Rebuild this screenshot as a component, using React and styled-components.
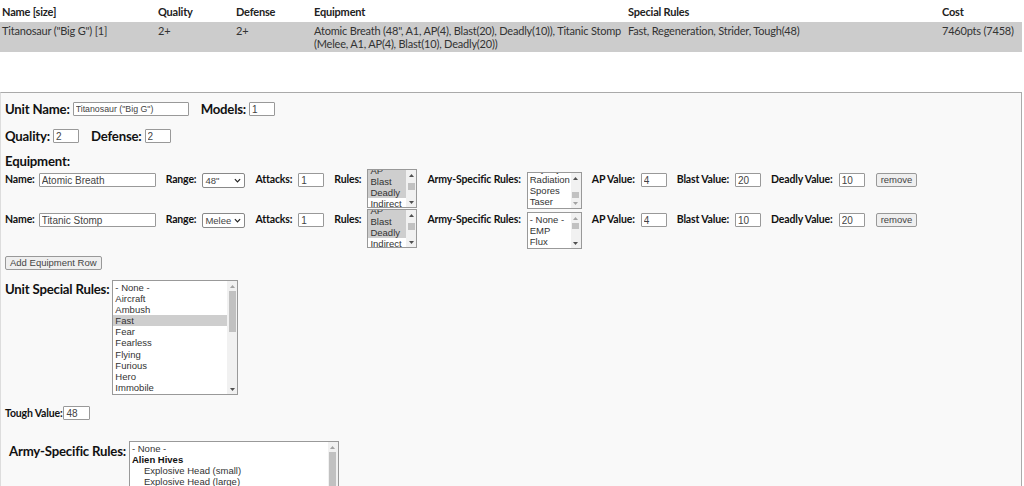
import React from 'react'
import styled, { createGlobalStyle } from 'styled-components'

const GlobalStyle = createGlobalStyle`
  body {
    margin: 0;
    background: #fff;
    font-family: Lato, "Noto Sans", sans-serif;
    color: #222;
  }
`

const ROW = 11.1
const ARROW = 10

const opts = list => list.map(label => ({ label }))

const ruleOptions = opts(['- None -', 'AP', 'Blast', 'Deadly', 'Indirect', 'Poison', 'Rending', 'Sniper'])
const armyOptions = opts(['- None -', 'EMP', 'Flux', 'Lacerate', 'Psy-Injected', 'Radiation', 'Spores', 'Taser'])
const specialRules = opts([
  '- None -', 'Aircraft', 'Ambush', 'Fast', 'Fear', 'Fearless', 'Flying', 'Furious', 'Hero',
  'Immobile', 'Impact', 'Indirect', 'Poison', 'Psychic', 'Regeneration', 'Relentless',
  'Scout', 'Slow', 'Sniper', 'Stealth', 'Strider', 'Tough', 'Transport',
])
const hiveRules = [
  { label: '- None -' },
  { label: 'Alien Hives', group: true },
  ...['Explosive Head (small)', 'Explosive Head (large)', 'Hive Bond', 'Infiltrate',
    'Regrowth', 'Spawn', 'Swarm', 'Synapse'].map(label => ({ label, child: true })),
  { label: 'Battle Brothers', group: true },
  ...['Bolter Drill', 'Combat Shield', 'Psy-Shield'].map(label => ({ label, child: true })),
]

const equipment = [
  { name: 'Atomic Breath', range: '48"', attacks: 1, rules: ['AP', 'Blast', 'Deadly'], armyScroll: 'bottom', ap: 4, blast: 20, deadly: 10 },
  { name: 'Titanic Stomp', range: 'Melee', attacks: 1, rules: ['AP', 'Blast', 'Deadly'], armyScroll: 0, ap: 4, blast: 10, deadly: 20 },
]

function ListBox({ items, selected = [], scroll = 0, width, height, mt = 0 }) {
  const view = height - 2
  const content = items.length * ROW + 2
  const maxScroll = Math.max(content - view, 0)
  const top = scroll === 'bottom' ? maxScroll : Math.min(scroll, maxScroll)
  const track = view - ARROW * 2
  const thumbH = Math.max(track * (view / content), 6)
  const thumbTop = (track - thumbH) * (maxScroll ? top / maxScroll : 0)

  return (
    <Frame $w={width} $h={height} $mt={mt}>
      <Viewport>
        <OptionList style={{ marginTop: 1 - top }}>
          {items.map(it => (
            <OptionRow
              key={it.label}
              $selected={selected.includes(it.label)}
              $group={it.group}
              $child={it.child}
            >
              {it.label}
            </OptionRow>
          ))}
        </OptionList>
      </Viewport>
      <ScrollBar>
        <ArrowBox>
          <svg width="5" height="3" viewBox="0 0 5 3">
            <polygon points="0,3 2.5,0 5,3" fill={top > 0 ? '#505050' : '#a3a3a3'} />
          </svg>
        </ArrowBox>
        <Track>
          <Thumb style={{ marginTop: thumbTop, height: thumbH }} />
        </Track>
        <ArrowBox>
          <svg width="5" height="3" viewBox="0 0 5 3">
            <polygon points="0,0 2.5,3 5,0" fill={top < maxScroll ? '#505050' : '#a3a3a3'} />
          </svg>
        </ArrowBox>
      </ScrollBar>
    </Frame>
  )
}

function RangePicker({ value }) {
  return (
    <SelectWrap>
      <RangeSelect defaultValue={value}>
        <option>Melee</option>
        <option>6"</option>
        <option>12"</option>
        <option>18"</option>
        <option>24"</option>
        <option>36"</option>
        <option>48"</option>
      </RangeSelect>
      <Chevron viewBox="0 0 8 5" width="7" height="5">
        <path d="M1 1 L4 4 L7 1" fill="none" stroke="#222" strokeWidth="1.4" />
      </Chevron>
    </SelectWrap>
  )
}

function EquipmentRow({ item }) {
  return (
    <EquipRow>
      <Label $tight>Name:</Label>
      <TextInput $w={117} defaultValue={item.name} />
      <Label $gap>Range:</Label>
      <RangePicker value={item.range} />
      <Label $gap>Attacks:</Label>
      <TextInput $w={26} defaultValue={item.attacks} />
      <Label $gap>Rules:</Label>
      <ListBox items={ruleOptions} selected={item.rules} scroll={17} width={50} height={39} />
      <Label $gap>Army-Specific Rules:</Label>
      <ListBox items={armyOptions} scroll={item.armyScroll} width={55} height={37} mt={3} />
      <Label $gap>AP Value:</Label>
      <TextInput $w={26} defaultValue={item.ap} />
      <Label $gap>Blast Value:</Label>
      <TextInput $w={26} defaultValue={item.blast} />
      <Label $gap>Deadly Value:</Label>
      <TextInput $w={26} defaultValue={item.deadly} />
      <SmallButton $gap>remove</SmallButton>
    </EquipRow>
  )
}

export default function App() {
  return (
    <>
      <GlobalStyle />
      <Roster>
        <RosterRow>
          <HeadCell>Name [size]</HeadCell>
          <HeadCell>Quality</HeadCell>
          <HeadCell>Defense</HeadCell>
          <HeadCell>Equipment</HeadCell>
          <HeadCell>Special Rules</HeadCell>
          <HeadCell>Cost</HeadCell>
        </RosterRow>
        <RosterRow $shaded>
          <Cell>Titanosaur ("Big G") [1]</Cell>
          <Cell>2+</Cell>
          <Cell>2+</Cell>
          <Cell>Atomic Breath (48", A1, AP(4), Blast(20), Deadly(10)), Titanic Stomp (Melee, A1, AP(4), Blast(10), Deadly(20))</Cell>
          <Cell>Fast, Regeneration, Strider, Tough(48)</Cell>
          <Cell $nowrap>7460pts (7458)</Cell>
        </RosterRow>
      </Roster>

      <Editor>
        <Line>
          <BigLabel>Unit Name:</BigLabel>
          <TextInput $w={116} $fs={8.8} defaultValue={'Titanosaur ("Big G")'} />
          <BigLabel $gap>Models:</BigLabel>
          <TextInput $w={26} defaultValue="1" />
        </Line>
        <Line $mt={9}>
          <BigLabel>Quality:</BigLabel>
          <TextInput $w={26} defaultValue="2" />
          <BigLabel $gap>Defense:</BigLabel>
          <TextInput $w={26} defaultValue="2" />
        </Line>
        <Heading>Equipment:</Heading>
        {equipment.map(item => <EquipmentRow key={item.name} item={item} />)}
        <SmallButton $mt={7}>Add Equipment Row</SmallButton>

        <TopLine $mt={10}>
          <BigLabel>Unit Special Rules:</BigLabel>
          <ListBox
            items={specialRules}
            selected={['Fast', 'Regeneration', 'Strider', 'Tough']}
            width={126}
            height={115}
          />
        </TopLine>

        <Line $mt={8}>
          <Label>Tough Value:</Label>
          <TextInput $w={27} $ml={-5} defaultValue="48" />
        </Line>

        <TopLine $mt={19} $pl={4}>
          <BigLabel>Army-Specific Rules:</BigLabel>
          <ListBox items={hiveRules} width={210} height={115} mt={-1} />
        </TopLine>
      </Editor>
    </>
  )
}

const Roster = styled.div`
  width: 100%;
  font-size: 11px;
  letter-spacing: -0.2px;
  color: #333;
`

const RosterRow = styled.div`
  display: grid;
  grid-template-columns: 156px 78px 78px 314px 314px 1fr;
  background: ${p => (p.$shaded ? '#cccccc' : 'transparent')};
  margin-right: 2px;
`

const HeadCell = styled.div`
  padding: 5px 2px 3px;
  font-weight: 700;
  color: #222;
  line-height: 14px;
`

const Cell = styled.div`
  padding: 2px;
  line-height: 13px;
  white-space: ${p => (p.$nowrap ? 'nowrap' : 'normal')};
`

const Editor = styled.div`
  margin: 40px 2px 0 0;
  border: 1px solid #aaa;
  border-left-color: #ddd;
  background: #f9f9f9;
  padding: 7px 5px 40px 4px;
  display: flex;
  flex-direction: column;
  align-items: flex-start;
`

const Line = styled.div`
  display: flex;
  align-items: center;
  margin-top: ${p => p.$mt || 0}px;
`

const TopLine = styled.div`
  display: flex;
  align-items: flex-start;
  margin-top: ${p => p.$mt || 0}px;
  padding-left: ${p => p.$pl || 0}px;
`

const BigLabel = styled.span`
  font-size: 13.2px;
  letter-spacing: -0.2px;
  font-weight: 700;
  color: #111;
  margin-left: ${p => (p.$gap ? 12 : 0)}px;
  margin-right: 3px;
  line-height: 18px;
`

const Heading = styled.div`
  font-size: 13.2px;
  letter-spacing: -0.2px;
  font-weight: 700;
  color: #111;
  margin-top: 8px;
  line-height: 16px;
`

const Label = styled.span`
  font-size: 10.5px;
  letter-spacing: -0.15px;
  font-weight: 700;
  color: #111;
  margin-left: ${p => (p.$gap ? 10 : 0)}px;
  margin-right: ${p => (p.$tight ? 4 : 6)}px;
  line-height: 20px;
  white-space: nowrap;
`

const TextInput = styled.input`
  box-sizing: border-box;
  width: ${p => p.$w}px;
  height: 14px;
  margin: 0 0 0 ${p => p.$ml || 0}px;
  padding: 0 2px;
  border: 1px solid #999;
  border-radius: 1px;
  background: #fff;
  font-family: "Liberation Sans", Arial, sans-serif;
  font-size: ${p => p.$fs || 10}px;
  color: #444;
`

const EquipRow = styled.div`
  display: flex;
  align-items: flex-start;
  height: 40px;
  & > input,
  & > button,
  & > label {
    margin-top: 4px;
  }
`

const SelectWrap = styled.label`
  position: relative;
  display: flex;
`

const RangeSelect = styled.select`
  appearance: none;
  box-sizing: border-box;
  width: 43px;
  height: 15px;
  margin: 0;
  padding: 0 0 0 2px;
  border: 1px solid #888;
  border-radius: 2px;
  background: #fff;
  font-family: "Liberation Sans", Arial, sans-serif;
  font-size: 9.5px;
  color: #444;
`

const Chevron = styled.svg`
  position: absolute;
  right: 4px;
  top: 5px;
  pointer-events: none;
`

const Frame = styled.div`
  box-sizing: border-box;
  display: flex;
  width: ${p => p.$w}px;
  height: ${p => p.$h}px;
  margin-top: ${p => p.$mt}px;
  border: 1px solid #999;
  background: #fff;
  flex-shrink: 0;
`

const Viewport = styled.div`
  flex: 1;
  min-width: 0;
  overflow: hidden;
`

const OptionList = styled.div`
  display: flex;
  flex-direction: column;
`

const OptionRow = styled.div`
  height: ${ROW}px;
  line-height: ${ROW}px;
  padding: 0 2px 0 ${p => (p.$child ? 14 : 2)}px;
  font-family: "Liberation Sans", Arial, sans-serif;
  font-size: 9.5px;
  font-weight: ${p => (p.$group ? 700 : 400)};
  color: ${p => (p.$group ? '#111' : '#333')};
  background: ${p => (p.$selected ? '#cecece' : 'transparent')};
  white-space: nowrap;
  overflow: hidden;
`

const ScrollBar = styled.div`
  width: 10px;
  flex-shrink: 0;
  display: flex;
  flex-direction: column;
  background: #f1f1f1;
`

const ArrowBox = styled.div`
  height: ${ARROW}px;
  display: flex;
  align-items: center;
  justify-content: center;
`

const Track = styled.div`
  flex: 1;
  display: flex;
  flex-direction: column;
  align-items: center;
`

const Thumb = styled.div`
  width: 7px;
  background: #c1c1c1;
`

const SmallButton = styled.button`
  box-sizing: border-box;
  height: 14px;
  margin: ${p => p.$mt || 0}px 0 0 ${p => (p.$gap ? 11 : 0)}px;
  padding: 0 4px;
  border: 1px solid #999;
  border-radius: 2px;
  background: #efefef;
  font-family: "Liberation Sans", Arial, sans-serif;
  font-size: 9.5px;
  color: #444;
  line-height: 12px;
`
